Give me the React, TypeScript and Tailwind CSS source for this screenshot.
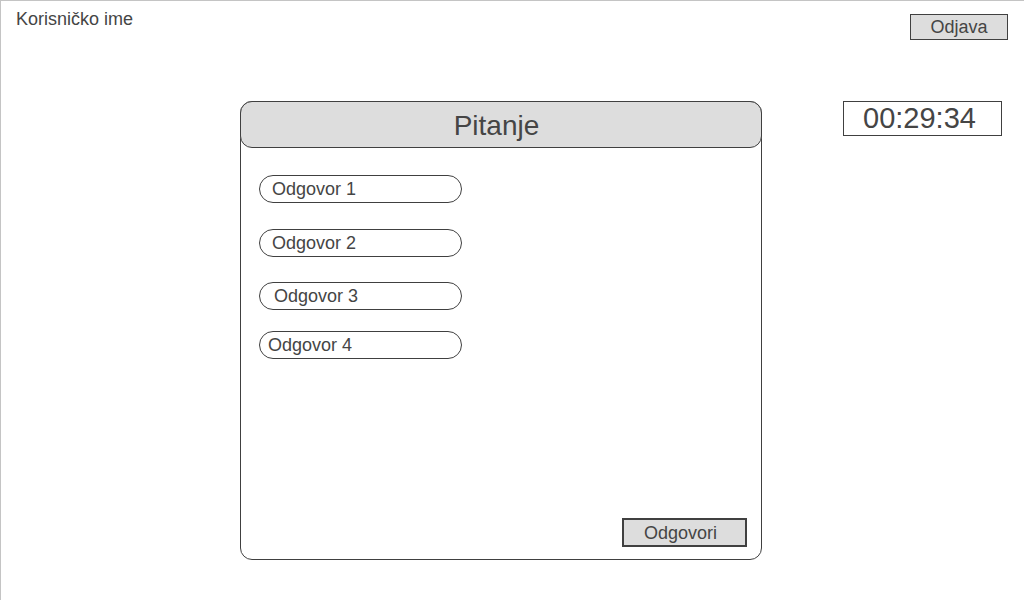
const answers = [
  { label: 'Odgovor 1', pad: 'pl-[12px]', gap: 'mt-[28px]' },
  { label: 'Odgovor 2', pad: 'pl-[12px]', gap: 'mt-[26px]' },
  { label: 'Odgovor 3', pad: 'pl-[14px]', gap: 'mt-[25px]' },
  { label: 'Odgovor 4', pad: 'pl-[8px]', gap: 'mt-[21px]' },
];

export default function App() {
  return (
    <div
      className="w-[1024px] h-[600px] bg-white border-t border-l border-[#c4c4c4] text-[#454545] overflow-hidden"
      style={{ fontFamily: '"Liberation Sans", Arial, sans-serif' }}
    >
      {/* top bar */}
      <div className="flex justify-between items-start h-[100px]">
        <div className="pl-[15px] pt-[8px] text-[18px] leading-[20px]">Korisničko ime</div>
        <button className="mt-[13px] mr-[16px] w-[98px] h-[26px] bg-[#dddddd] border border-[#404040] text-[18px] leading-[22px] text-[#454545]">
          Odjava
        </button>
      </div>

      <div className="flex items-start pl-[239px]">
        {/* question card */}
        <div className="w-[522px] h-[459px] border border-[#404040] rounded-[12px] flex flex-col">
          <div className="-m-px h-[47px] bg-[#dddddd] border border-[#404040] rounded-[12px] flex items-center justify-center text-[28px] pt-[2px] pr-[9px]">
            Pitanje
          </div>
          <div className="flex flex-col pl-[18px]">
            {answers.map((a) => (
              <div
                key={a.label}
                className={`${a.gap} ${a.pad} w-[203px] h-[28px] border border-[#404040] rounded-full flex items-center text-[18px]`}
              >
                {a.label}
              </div>
            ))}
          </div>
          <div className="mt-auto flex justify-end pr-[14px] pb-[12px]">
            <button className="w-[125px] h-[29px] bg-[#dddddd] border-2 border-[#404040] text-[18px] leading-[22px] text-[#454545] text-left pl-[20px]">
              Odgovori
            </button>
          </div>
        </div>

        {/* timer */}
        <div className="ml-[81px] w-[159px] h-[35px] border border-[#404040] text-[29px] leading-[30px] pl-[19px] pt-[1px]">
          00:29:34
        </div>
      </div>
    </div>
  );
}
